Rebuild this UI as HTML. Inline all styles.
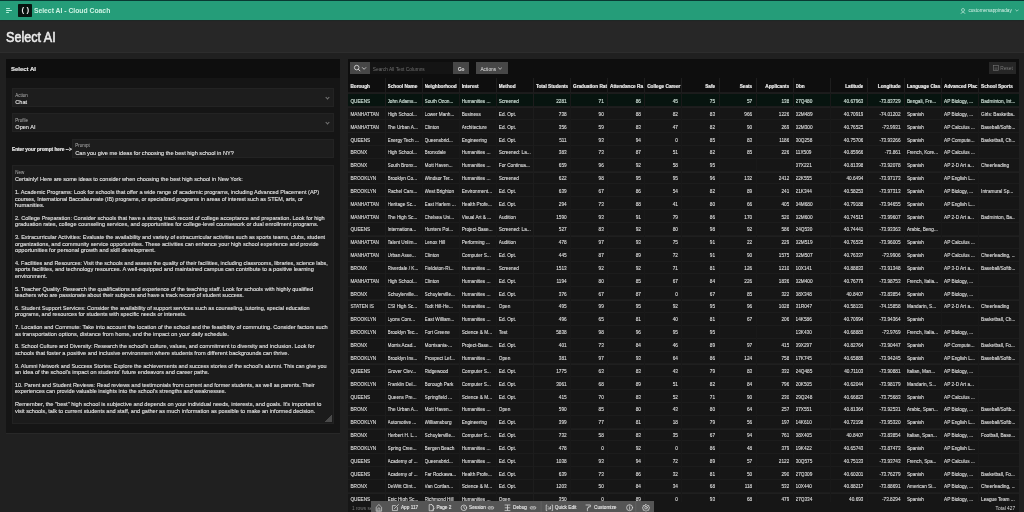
<!DOCTYPE html>
<html><head><meta charset="utf-8"><title>Select AI - Cloud Coach</title>
<style>
*{box-sizing:border-box}
html,body{margin:0;padding:0}
body{width:1024px;height:512px;overflow:hidden;position:relative;background:#1e1e1e;font-family:"Liberation Sans",sans-serif;color:#e6e6e6}
.a{position:absolute}
.topline{position:absolute;left:0;top:0;width:1024px;height:1.2px;background:#0a3a33}
.hdr{position:absolute;left:0;top:1.2px;width:1024px;height:18.4px;background:#259d79;box-shadow:0 0.8px 1.4px rgba(8,42,34,0.9)}
.ham{position:absolute;left:5.7px;height:0.9px;background:#b8f2dd;border-radius:1px}
.logo{position:absolute;left:18.3px;top:4px;width:13.7px;height:12.7px;background:#08140f;border-radius:0.8px}
.apptitle{position:absolute;left:33.9px;top:5.9px;font-size:6.8px;line-height:10px;font-weight:bold;color:#cdf3e4;white-space:nowrap}
.user{position:absolute;left:968.4px;top:7.2px;font-size:4.71px;line-height:8px;color:#d6f1e8;white-space:nowrap}
.band{position:absolute;left:0;top:19.6px;width:1024px;height:32px;background:#272727}
.bandline{position:absolute;left:0;top:51.6px;width:1024px;height:1.2px;background:#2d2d2d}
.ptitle{position:absolute;left:6.1px;top:29px;font-size:14px;line-height:16px;font-weight:normal;color:#ececec;white-space:nowrap;transform:scaleX(0.9);transform-origin:0 0;-webkit-text-stroke:0.55px #ececec}
.regL{position:absolute;left:6.2px;top:58.5px;width:333.6px;height:374.2px;background:#151515;box-shadow:0 1px 0 #282828}
.regLh{position:absolute;left:6.2px;top:58.5px;width:333.6px;height:19.1px;background:#0e0e0e}
.rtitle{position:absolute;left:10.9px;top:64.6px;font-size:6px;line-height:9px;font-weight:bold;color:#e8e8e8;white-space:nowrap}
.fld{position:absolute;background:#1d1d1d;border:0.6px solid #232323}
.lbl{position:absolute;font-size:4.5px;line-height:6px;color:#b4b4b4;white-space:nowrap}
.val{position:absolute;font-size:5.6px;line-height:8px;color:#e4e4e4;white-space:nowrap}
.chev{position:absolute;width:3px;height:3px;border-right:0.7px solid #777;border-bottom:0.7px solid #777;transform:rotate(45deg)}
.plabel{position:absolute;left:12px;top:147.4px;font-size:4.73px;line-height:6.5px;font-weight:bold;color:#e8e8e8;white-space:nowrap}
.ta{position:absolute;left:11.8px;top:164.8px;width:322.2px;height:259px;background:#1b1b1b;border:0.6px solid #222}
.tatext{position:absolute;left:2.45px;top:10.7px;font-size:6px;line-height:6.43px;color:#e2e2e2;white-space:nowrap;transform:scaleX(0.925);transform-origin:0 0}
.ln{height:6.43px}
.grip{position:absolute;right:0.8px;bottom:0.8px;width:7px;height:7px;background:linear-gradient(135deg,transparent 50%,#4a4a4a 50%)}
.regR{position:absolute;left:347.9px;top:59.2px;width:671.1px;height:460px;background:#161616}
.regRt{position:absolute;left:347.9px;top:59.2px;width:671.1px;height:18.6px;background:#0e0e0e}
.btn{position:absolute;background:#474747;color:#e0e0e0;font-size:4.8px;line-height:12.7px;text-align:center;white-space:nowrap;padding-top:1.7px}
.srch{position:absolute;left:370.2px;top:61.8px;width:83.2px;height:12.7px;background:#141414}
.thead{position:absolute;left:348px;top:77.8px;width:671px;height:15.6px;background:#0e0e0e;border-bottom:1px solid #1b1b1b}
.th{position:absolute;top:1.4px;height:15.6px;line-height:15.6px;font-size:4.72px;font-weight:bold;color:#ececec;white-space:nowrap;overflow:hidden}
.r{text-align:right}
.vl{position:absolute;top:0;width:0.6px;height:15.6px;background:#1e1e1e}
.tbody{position:absolute;left:348px;top:93.4px;width:671px;height:420px}
.vlb{position:absolute;top:0;width:0.6px;height:420px;background:#181818}
.tr{position:absolute;left:0;width:671px;border-bottom:0.8px solid #1c1c1c}
.tr.b5{border-top:1.2px solid #1f1f1f}
.b5 .td{top:0.25px}
.tr.hl{background:#07140f;border-bottom:1px solid #1c1c1c;border-top:1px solid #1c1c1c}
.hl .td{top:0.95px;height:14px;line-height:14px;color:#cfe0d8}
.td{position:absolute;top:1.45px;height:12.85px;line-height:12.85px;font-size:4.72px;color:#dcdcdc;white-space:nowrap;overflow:hidden}
.dev{position:absolute;left:371.2px;top:501px;width:283px;height:11px;background:#555}
.dt{position:absolute;top:503.4px;font-size:4.75px;line-height:10px;color:#e6e6e6;white-space:nowrap}
.tatext,.val,.td,.dt{-webkit-text-stroke:0.12px currentColor}
.th,.plabel,.rtitle{-webkit-text-stroke:0.18px currentColor}
</style></head><body><div id="root" style="position:absolute;left:0;top:0;width:1024px;height:512px;will-change:transform;background:#202020">
<div class="band"></div>
<div class="bandline"></div>
<div class="topline"></div>
<div class="hdr"></div>
<div class="ham" style="top:7.7px;width:4.8px"></div>
<div class="ham" style="top:9.8px;width:6.3px"></div>
<div class="ham" style="top:11.9px;width:3.6px"></div>
<div class="logo"></div>
<div class="a" style="left:21.6px;top:5.2px;font-size:8px;line-height:10px;color:#e8e8e8;font-weight:bold;white-space:nowrap">( )</div>
<div class="apptitle">Select AI - Cloud Coach</div>
<svg class="a" style="left:960px;top:8px" width="6" height="6" viewBox="0 0 6 6"><circle cx="3" cy="2" r="1.5" fill="none" stroke="#d6f1e8" stroke-width="0.6"/><path d="M0.6 5.6 Q3 2.6 5.4 5.6" fill="none" stroke="#d6f1e8" stroke-width="0.6"/></svg>
<div class="user">customersappinaday</div>
<svg class="a" style="left:1015px;top:8.8px" width="4" height="3" viewBox="0 0 4 3"><path d="M0.4 0.6 L2 2.2 L3.6 0.6" fill="none" stroke="#d6f1e8" stroke-width="0.6"/></svg>
<div class="ptitle">Select AI</div>

<div class="regL"></div>
<div class="regLh"></div>
<div class="rtitle">Select AI</div>
<div class="fld" style="left:12px;top:88.3px;width:322px;height:18.3px"></div>
<div class="lbl" style="left:15.3px;top:92.9px">Action</div>
<div class="val" style="left:15.3px;top:98.2px">Chat</div>
<div class="chev" style="left:325.6px;top:96.4px"></div>
<div class="fld" style="left:12px;top:113px;width:322px;height:18.8px"></div>
<div class="lbl" style="left:15.3px;top:117.6px">Profile</div>
<div class="val" style="left:15.3px;top:123.4px">Open AI</div>
<div class="chev" style="left:325.6px;top:121.4px"></div>
<div class="plabel">Enter your prompt here --&gt;</div>
<div class="fld" style="left:72.3px;top:138.9px;width:261.7px;height:19.3px"></div>
<div class="lbl" style="left:75.3px;top:142.5px">Prompt</div>
<div class="val" style="left:75.3px;top:149.3px">Can you give me ideas for choosing the best high school in NY?</div>

<div class="regR"></div>
<div class="regRt"></div>
<div class="btn" style="left:350.3px;top:61.8px;width:19.9px;height:12.7px"></div>
<svg class="a" style="left:352.5px;top:63.8px" width="14" height="9" viewBox="0 0 14 9"><circle cx="3.7" cy="3.6" r="2.3" fill="none" stroke="#d2d2d2" stroke-width="0.9"/><path d="M5.4 5.3 L7 6.9" stroke="#d2d2d2" stroke-width="1" stroke-linecap="round"/><path d="M9.1 3.3 L11.1 5.3 L13.1 3.3" fill="none" stroke="#d2d2d2" stroke-width="0.85"/></svg>
<div class="srch"></div>
<div class="a" style="left:372.8px;top:65.6px;font-size:4.8px;line-height:8px;color:#6f6f6f;white-space:nowrap">Search All Text Columns</div>
<div class="btn" style="left:453.2px;top:62.1px;width:16.1px;height:12.3px;font-weight:bold">Go</div>
<div class="btn" style="left:476.1px;top:62.1px;width:31.6px;height:12.3px;text-align:left;padding-left:4.3px">Actions</div>
<svg class="a" style="left:497.6px;top:66.8px" width="4.2" height="3" viewBox="0 0 4.2 3"><path d="M0.3 0.4 L2.1 2.4 L3.9 0.4" fill="none" stroke="#ddd" stroke-width="0.7"/></svg>
<div class="btn" style="left:989px;top:61.7px;width:27px;height:12.3px;background:#262626;color:#777;padding-left:8px">Reset</div>
<svg class="a" style="left:992.5px;top:64.8px" width="6" height="6" viewBox="0 0 6 6"><rect x="0.5" y="0.5" width="5" height="5" fill="none" stroke="#777" stroke-width="0.6"/><path d="M1.5 3 H4.5 M1.5 4.2 H4.5" stroke="#777" stroke-width="0.5"/></svg>

<div class="ta"><div class="lbl" style="left:2.5px;top:4px">New</div><div class="tatext">
<div class="ln"><span style="display:inline-block;transform:scaleX(1.0031);transform-origin:0 0">Certainly! Here are some ideas to consider when choosing the best high school in New York:</span></div>
<div class="ln">&nbsp;</div>
<div class="ln"><span style="display:inline-block;transform:scaleX(1.0013);transform-origin:0 0">1. Academic Programs: Look for schools that offer a wide range of academic programs, including Advanced Placement (AP)</span></div>
<div class="ln"><span style="display:inline-block;transform:scaleX(0.9829);transform-origin:0 0">courses, International Baccalaureate (IB) programs, or specialized programs in areas of interest such as STEM, arts, or</span></div>
<div class="ln"><span style="display:inline-block;transform:scaleX(1.0357);transform-origin:0 0">humanities.</span></div>
<div class="ln">&nbsp;</div>
<div class="ln"><span style="display:inline-block;transform:scaleX(1.0039);transform-origin:0 0">2. College Preparation: Consider schools that have a strong track record of college acceptance and preparation. Look for high</span></div>
<div class="ln"><span style="display:inline-block;transform:scaleX(1.0140);transform-origin:0 0">graduation rates, college counseling services, and opportunities for college-level coursework or dual enrollment programs.</span></div>
<div class="ln">&nbsp;</div>
<div class="ln"><span style="display:inline-block;transform:scaleX(0.9942);transform-origin:0 0">3. Extracurricular Activities: Evaluate the availability and variety of extracurricular activities such as sports teams, clubs, student</span></div>
<div class="ln"><span style="display:inline-block;transform:scaleX(1.0056);transform-origin:0 0">organizations, and community service opportunities. These activities can enhance your high school experience and provide</span></div>
<div class="ln"><span style="display:inline-block;transform:scaleX(1.0234);transform-origin:0 0">opportunities for personal growth and skill development.</span></div>
<div class="ln">&nbsp;</div>
<div class="ln"><span style="display:inline-block;transform:scaleX(0.9830);transform-origin:0 0">4. Facilities and Resources: Visit the schools and assess the quality of their facilities, including classrooms, libraries, science labs,</span></div>
<div class="ln"><span style="display:inline-block;transform:scaleX(1.0153);transform-origin:0 0">sports facilities, and technology resources. A well-equipped and maintained campus can contribute to a positive learning</span></div>
<div class="ln"><span style="display:inline-block;transform:scaleX(1.0000);transform-origin:0 0">environment.</span></div>
<div class="ln">&nbsp;</div>
<div class="ln"><span style="display:inline-block;transform:scaleX(1.0037);transform-origin:0 0">5. Teacher Quality: Research the qualifications and experience of the teaching staff. Look for schools with highly qualified</span></div>
<div class="ln"><span style="display:inline-block;transform:scaleX(0.9969);transform-origin:0 0">teachers who are passionate about their subjects and have a track record of student success.</span></div>
<div class="ln">&nbsp;</div>
<div class="ln"><span style="display:inline-block;transform:scaleX(0.9980);transform-origin:0 0">6. Student Support Services: Consider the availability of support services such as counseling, tutoring, special education</span></div>
<div class="ln"><span style="display:inline-block;transform:scaleX(1.0035);transform-origin:0 0">programs, and resources for students with specific needs or interests.</span></div>
<div class="ln">&nbsp;</div>
<div class="ln"><span style="display:inline-block;transform:scaleX(1.0126);transform-origin:0 0">7. Location and Commute: Take into account the location of the school and the feasibility of commuting. Consider factors such</span></div>
<div class="ln"><span style="display:inline-block;transform:scaleX(1.0157);transform-origin:0 0">as transportation options, distance from home, and the impact on your daily schedule.</span></div>
<div class="ln">&nbsp;</div>
<div class="ln"><span style="display:inline-block;transform:scaleX(0.9973);transform-origin:0 0">8. School Culture and Diversity: Research the school's culture, values, and commitment to diversity and inclusion. Look for</span></div>
<div class="ln"><span style="display:inline-block;transform:scaleX(1.0164);transform-origin:0 0">schools that foster a positive and inclusive environment where students from different backgrounds can thrive.</span></div>
<div class="ln">&nbsp;</div>
<div class="ln"><span style="display:inline-block;transform:scaleX(0.9892);transform-origin:0 0">9. Alumni Network and Success Stories: Explore the achievements and success stories of the school's alumni. This can give you</span></div>
<div class="ln"><span style="display:inline-block;transform:scaleX(1.0104);transform-origin:0 0">an idea of the school's impact on students' future endeavors and career paths.</span></div>
<div class="ln">&nbsp;</div>
<div class="ln"><span style="display:inline-block;transform:scaleX(0.9875);transform-origin:0 0">10. Parent and Student Reviews: Read reviews and testimonials from current and former students, as well as parents. Their</span></div>
<div class="ln"><span style="display:inline-block;transform:scaleX(0.9925);transform-origin:0 0">experiences can provide valuable insights into the school's strengths and weaknesses.</span></div>
<div class="ln">&nbsp;</div>
<div class="ln"><span style="display:inline-block;transform:scaleX(1.0132);transform-origin:0 0">Remember, the "best" high school is subjective and depends on your individual needs, interests, and goals. It's important to</span></div>
<div class="ln"><span style="display:inline-block;transform:scaleX(1.0074);transform-origin:0 0">visit schools, talk to current students and staff, and gather as much information as possible to make an informed decision.</span></div>
</div><div class="grip"></div></div>
<div class="thead">
<div class="th" style="left:2.40px;width:34.10px">Borough</div>
<div class="th" style="left:39.50px;width:34.10px">School Name</div>
<div class="th" style="left:76.60px;width:34.10px">Neighborhood</div>
<div class="th" style="left:113.70px;width:34.10px">Interest</div>
<div class="th" style="left:150.80px;width:34.10px">Method</div>
<div class="th" style="left:187.90px;width:34.10px">Total Students</div>
<div class="th" style="left:225.00px;width:34.10px">Graduation Rat</div>
<div class="th" style="left:262.10px;width:34.10px">Attendance Ra</div>
<div class="th" style="left:299.20px;width:34.10px">College Career</div>
<div class="th r" style="left:333.90px;width:33.20px">Safe</div>
<div class="th r" style="left:371.00px;width:33.20px">Seats</div>
<div class="th r" style="left:408.10px;width:33.20px">Applicants</div>
<div class="th" style="left:447.60px;width:34.10px">Dbn</div>
<div class="th r" style="left:482.30px;width:33.20px">Latitude</div>
<div class="th r" style="left:519.40px;width:33.20px">Longitude</div>
<div class="th" style="left:558.90px;width:34.10px">Language Clas</div>
<div class="th" style="left:596.00px;width:34.10px">Advanced Plac</div>
<div class="th" style="left:633.10px;width:34.10px">School Sports</div>
<div class="vl" style="left:36.60px"></div>
<div class="vl" style="left:73.70px"></div>
<div class="vl" style="left:110.80px"></div>
<div class="vl" style="left:147.90px"></div>
<div class="vl" style="left:185.00px"></div>
<div class="vl" style="left:222.10px"></div>
<div class="vl" style="left:259.20px"></div>
<div class="vl" style="left:296.30px"></div>
<div class="vl" style="left:333.40px"></div>
<div class="vl" style="left:370.50px"></div>
<div class="vl" style="left:407.60px"></div>
<div class="vl" style="left:444.70px"></div>
<div class="vl" style="left:481.80px"></div>
<div class="vl" style="left:518.90px"></div>
<div class="vl" style="left:556.00px"></div>
<div class="vl" style="left:593.10px"></div>
<div class="vl" style="left:630.20px"></div>
</div>
<div class="tbody">
<div class="tr hl" style="top:0.00px;height:14.00px">
<span class="td" style="left:2.40px;width:33.90px">QUEENS</span>
<span class="td" style="left:39.50px;width:33.90px">John Adams...</span>
<span class="td" style="left:76.60px;width:33.90px">South Ozon...</span>
<span class="td" style="left:113.70px;width:33.90px">Humanities ...</span>
<span class="td" style="left:150.80px;width:33.90px">Screened</span>
<span class="td r" style="left:185.50px;width:33.20px">2281</span>
<span class="td r" style="left:222.60px;width:33.20px">71</span>
<span class="td r" style="left:259.70px;width:33.20px">86</span>
<span class="td r" style="left:296.80px;width:33.20px">45</span>
<span class="td r" style="left:333.90px;width:33.20px">75</span>
<span class="td r" style="left:371.00px;width:33.20px">57</span>
<span class="td r" style="left:408.10px;width:33.20px">138</span>
<span class="td" style="left:447.60px;width:33.90px">27Q480</span>
<span class="td r" style="left:482.30px;width:33.20px">40.67963</span>
<span class="td r" style="left:519.40px;width:33.20px">-73.83729</span>
<span class="td" style="left:558.90px;width:33.90px">Bengali, Fre...</span>
<span class="td" style="left:596.00px;width:33.90px">AP Biology, ...</span>
<span class="td" style="left:633.10px;width:33.90px">Badminton, Int...</span>
</div>
<div class="tr b5" style="top:14.00px;height:12.85px">
<span class="td" style="left:2.40px;width:33.90px">MANHATTAN</span>
<span class="td" style="left:39.50px;width:33.90px">High School...</span>
<span class="td" style="left:76.60px;width:33.90px">Lower Manh...</span>
<span class="td" style="left:113.70px;width:33.90px">Business</span>
<span class="td" style="left:150.80px;width:33.90px">Ed. Opt.</span>
<span class="td r" style="left:185.50px;width:33.20px">738</span>
<span class="td r" style="left:222.60px;width:33.20px">90</span>
<span class="td r" style="left:259.70px;width:33.20px">88</span>
<span class="td r" style="left:296.80px;width:33.20px">82</span>
<span class="td r" style="left:333.90px;width:33.20px">83</span>
<span class="td r" style="left:371.00px;width:33.20px">966</span>
<span class="td r" style="left:408.10px;width:33.20px">1226</span>
<span class="td" style="left:447.60px;width:33.90px">02M489</span>
<span class="td r" style="left:482.30px;width:33.20px">40.70919</span>
<span class="td r" style="left:519.40px;width:33.20px">-74.01202</span>
<span class="td" style="left:558.90px;width:33.90px">Spanish</span>
<span class="td" style="left:596.00px;width:33.90px">AP Biology, ...</span>
<span class="td" style="left:633.10px;width:33.90px">Girls: Basketba...</span>
</div>
<div class="tr" style="top:26.85px;height:12.85px">
<span class="td" style="left:2.40px;width:33.90px">MANHATTAN</span>
<span class="td" style="left:39.50px;width:33.90px">The Urban A...</span>
<span class="td" style="left:76.60px;width:33.90px">Clinton</span>
<span class="td" style="left:113.70px;width:33.90px">Architecture</span>
<span class="td" style="left:150.80px;width:33.90px">Ed. Opt.</span>
<span class="td r" style="left:185.50px;width:33.20px">356</span>
<span class="td r" style="left:222.60px;width:33.20px">59</span>
<span class="td r" style="left:259.70px;width:33.20px">83</span>
<span class="td r" style="left:296.80px;width:33.20px">47</span>
<span class="td r" style="left:333.90px;width:33.20px">82</span>
<span class="td r" style="left:371.00px;width:33.20px">90</span>
<span class="td r" style="left:408.10px;width:33.20px">269</span>
<span class="td" style="left:447.60px;width:33.90px">02M300</span>
<span class="td r" style="left:482.30px;width:33.20px">40.76525</span>
<span class="td r" style="left:519.40px;width:33.20px">-73.9931</span>
<span class="td" style="left:558.90px;width:33.90px">Spanish</span>
<span class="td" style="left:596.00px;width:33.90px">AP Calculus ...</span>
<span class="td" style="left:633.10px;width:33.90px">Baseball/Softb...</span>
</div>
<div class="tr" style="top:39.70px;height:12.85px">
<span class="td" style="left:2.40px;width:33.90px">QUEENS</span>
<span class="td" style="left:39.50px;width:33.90px">Energy Tech ...</span>
<span class="td" style="left:76.60px;width:33.90px">Queensbrid...</span>
<span class="td" style="left:113.70px;width:33.90px">Engineering</span>
<span class="td" style="left:150.80px;width:33.90px">Ed. Opt.</span>
<span class="td r" style="left:185.50px;width:33.20px">511</span>
<span class="td r" style="left:222.60px;width:33.20px">93</span>
<span class="td r" style="left:259.70px;width:33.20px">94</span>
<span class="td r" style="left:296.80px;width:33.20px">0</span>
<span class="td r" style="left:333.90px;width:33.20px">85</span>
<span class="td r" style="left:371.00px;width:33.20px">83</span>
<span class="td r" style="left:408.10px;width:33.20px">1186</span>
<span class="td" style="left:447.60px;width:33.90px">30Q258</span>
<span class="td r" style="left:482.30px;width:33.20px">40.75706</span>
<span class="td r" style="left:519.40px;width:33.20px">-73.93266</span>
<span class="td" style="left:558.90px;width:33.90px">Spanish</span>
<span class="td" style="left:596.00px;width:33.90px">AP Compute...</span>
<span class="td" style="left:633.10px;width:33.90px">Basketball, Ch...</span>
</div>
<div class="tr" style="top:52.55px;height:12.85px">
<span class="td" style="left:2.40px;width:33.90px">BRONX</span>
<span class="td" style="left:39.50px;width:33.90px">High School...</span>
<span class="td" style="left:76.60px;width:33.90px">Bronxdale</span>
<span class="td" style="left:113.70px;width:33.90px">Humanities ...</span>
<span class="td" style="left:150.80px;width:33.90px">Screened: La...</span>
<span class="td r" style="left:185.50px;width:33.20px">383</span>
<span class="td r" style="left:222.60px;width:33.20px">73</span>
<span class="td r" style="left:259.70px;width:33.20px">87</span>
<span class="td r" style="left:296.80px;width:33.20px">51</span>
<span class="td r" style="left:333.90px;width:33.20px">82</span>
<span class="td r" style="left:371.00px;width:33.20px">85</span>
<span class="td r" style="left:408.10px;width:33.20px">226</span>
<span class="td" style="left:447.60px;width:33.90px">11X509</span>
<span class="td r" style="left:482.30px;width:33.20px">40.85966</span>
<span class="td r" style="left:519.40px;width:33.20px">-73.861</span>
<span class="td" style="left:558.90px;width:33.90px">French, Kore...</span>
<span class="td" style="left:596.00px;width:33.90px">AP Calculus ...</span>
<span class="td" style="left:633.10px;width:33.90px"></span>
</div>
<div class="tr" style="top:65.40px;height:12.85px">
<span class="td" style="left:2.40px;width:33.90px">BRONX</span>
<span class="td" style="left:39.50px;width:33.90px">South Bronx...</span>
<span class="td" style="left:76.60px;width:33.90px">Mott Haven...</span>
<span class="td" style="left:113.70px;width:33.90px">Humanities ...</span>
<span class="td" style="left:150.80px;width:33.90px">For Continua...</span>
<span class="td r" style="left:185.50px;width:33.20px">659</span>
<span class="td r" style="left:222.60px;width:33.20px">96</span>
<span class="td r" style="left:259.70px;width:33.20px">92</span>
<span class="td r" style="left:296.80px;width:33.20px">58</span>
<span class="td r" style="left:333.90px;width:33.20px">95</span>
<span class="td r" style="left:371.00px;width:33.20px"></span>
<span class="td r" style="left:408.10px;width:33.20px"></span>
<span class="td" style="left:447.60px;width:33.90px">07X221</span>
<span class="td r" style="left:482.30px;width:33.20px">40.81398</span>
<span class="td r" style="left:519.40px;width:33.20px">-73.92078</span>
<span class="td" style="left:558.90px;width:33.90px">Spanish</span>
<span class="td" style="left:596.00px;width:33.90px">AP 2-D Art a...</span>
<span class="td" style="left:633.10px;width:33.90px">Cheerleading</span>
</div>
<div class="tr b5" style="top:78.25px;height:12.85px">
<span class="td" style="left:2.40px;width:33.90px">BROOKLYN</span>
<span class="td" style="left:39.50px;width:33.90px">Brooklyn Co...</span>
<span class="td" style="left:76.60px;width:33.90px">Windsor Ter...</span>
<span class="td" style="left:113.70px;width:33.90px">Humanities ...</span>
<span class="td" style="left:150.80px;width:33.90px">Screened</span>
<span class="td r" style="left:185.50px;width:33.20px">622</span>
<span class="td r" style="left:222.60px;width:33.20px">98</span>
<span class="td r" style="left:259.70px;width:33.20px">95</span>
<span class="td r" style="left:296.80px;width:33.20px">95</span>
<span class="td r" style="left:333.90px;width:33.20px">96</span>
<span class="td r" style="left:371.00px;width:33.20px">132</span>
<span class="td r" style="left:408.10px;width:33.20px">2412</span>
<span class="td" style="left:447.60px;width:33.90px">22K555</span>
<span class="td r" style="left:482.30px;width:33.20px">40.6494</span>
<span class="td r" style="left:519.40px;width:33.20px">-73.97173</span>
<span class="td" style="left:558.90px;width:33.90px">Spanish</span>
<span class="td" style="left:596.00px;width:33.90px">AP English L...</span>
<span class="td" style="left:633.10px;width:33.90px"></span>
</div>
<div class="tr" style="top:91.10px;height:12.85px">
<span class="td" style="left:2.40px;width:33.90px">BROOKLYN</span>
<span class="td" style="left:39.50px;width:33.90px">Rachel Cars...</span>
<span class="td" style="left:76.60px;width:33.90px">West Brighton</span>
<span class="td" style="left:113.70px;width:33.90px">Environment...</span>
<span class="td" style="left:150.80px;width:33.90px">Ed. Opt.</span>
<span class="td r" style="left:185.50px;width:33.20px">639</span>
<span class="td r" style="left:222.60px;width:33.20px">67</span>
<span class="td r" style="left:259.70px;width:33.20px">86</span>
<span class="td r" style="left:296.80px;width:33.20px">54</span>
<span class="td r" style="left:333.90px;width:33.20px">82</span>
<span class="td r" style="left:371.00px;width:33.20px">89</span>
<span class="td r" style="left:408.10px;width:33.20px">241</span>
<span class="td" style="left:447.60px;width:33.90px">21K344</span>
<span class="td r" style="left:482.30px;width:33.20px">40.58253</span>
<span class="td r" style="left:519.40px;width:33.20px">-73.97313</span>
<span class="td" style="left:558.90px;width:33.90px">Spanish</span>
<span class="td" style="left:596.00px;width:33.90px">AP Biology, ...</span>
<span class="td" style="left:633.10px;width:33.90px">Intramural Sp...</span>
</div>
<div class="tr" style="top:103.95px;height:12.85px">
<span class="td" style="left:2.40px;width:33.90px">MANHATTAN</span>
<span class="td" style="left:39.50px;width:33.90px">Heritage Sc...</span>
<span class="td" style="left:76.60px;width:33.90px">East Harlem ...</span>
<span class="td" style="left:113.70px;width:33.90px">Health Profe...</span>
<span class="td" style="left:150.80px;width:33.90px">Ed. Opt.</span>
<span class="td r" style="left:185.50px;width:33.20px">294</span>
<span class="td r" style="left:222.60px;width:33.20px">73</span>
<span class="td r" style="left:259.70px;width:33.20px">88</span>
<span class="td r" style="left:296.80px;width:33.20px">41</span>
<span class="td r" style="left:333.90px;width:33.20px">80</span>
<span class="td r" style="left:371.00px;width:33.20px">66</span>
<span class="td r" style="left:408.10px;width:33.20px">405</span>
<span class="td" style="left:447.60px;width:33.90px">04M680</span>
<span class="td r" style="left:482.30px;width:33.20px">40.79188</span>
<span class="td r" style="left:519.40px;width:33.20px">-73.94655</span>
<span class="td" style="left:558.90px;width:33.90px">Spanish</span>
<span class="td" style="left:596.00px;width:33.90px">AP English L...</span>
<span class="td" style="left:633.10px;width:33.90px"></span>
</div>
<div class="tr" style="top:116.80px;height:12.85px">
<span class="td" style="left:2.40px;width:33.90px">MANHATTAN</span>
<span class="td" style="left:39.50px;width:33.90px">The High Sc...</span>
<span class="td" style="left:76.60px;width:33.90px">Chelsea Uni...</span>
<span class="td" style="left:113.70px;width:33.90px">Visual Art &amp; ...</span>
<span class="td" style="left:150.80px;width:33.90px">Audition</span>
<span class="td r" style="left:185.50px;width:33.20px">1590</span>
<span class="td r" style="left:222.60px;width:33.20px">93</span>
<span class="td r" style="left:259.70px;width:33.20px">91</span>
<span class="td r" style="left:296.80px;width:33.20px">79</span>
<span class="td r" style="left:333.90px;width:33.20px">86</span>
<span class="td r" style="left:371.00px;width:33.20px">170</span>
<span class="td r" style="left:408.10px;width:33.20px">520</span>
<span class="td" style="left:447.60px;width:33.90px">02M600</span>
<span class="td r" style="left:482.30px;width:33.20px">40.74515</span>
<span class="td r" style="left:519.40px;width:33.20px">-73.99607</span>
<span class="td" style="left:558.90px;width:33.90px">Spanish</span>
<span class="td" style="left:596.00px;width:33.90px">AP 2-D Art a...</span>
<span class="td" style="left:633.10px;width:33.90px">Badminton, Ba...</span>
</div>
<div class="tr" style="top:129.65px;height:12.85px">
<span class="td" style="left:2.40px;width:33.90px">QUEENS</span>
<span class="td" style="left:39.50px;width:33.90px">Internationa...</span>
<span class="td" style="left:76.60px;width:33.90px">Hunters Poi...</span>
<span class="td" style="left:113.70px;width:33.90px">Project-Base...</span>
<span class="td" style="left:150.80px;width:33.90px">Screened: La...</span>
<span class="td r" style="left:185.50px;width:33.20px">527</span>
<span class="td r" style="left:222.60px;width:33.20px">83</span>
<span class="td r" style="left:259.70px;width:33.20px">92</span>
<span class="td r" style="left:296.80px;width:33.20px">80</span>
<span class="td r" style="left:333.90px;width:33.20px">98</span>
<span class="td r" style="left:371.00px;width:33.20px">92</span>
<span class="td r" style="left:408.10px;width:33.20px">586</span>
<span class="td" style="left:447.60px;width:33.90px">24Q530</span>
<span class="td r" style="left:482.30px;width:33.20px">40.74441</span>
<span class="td r" style="left:519.40px;width:33.20px">-73.93363</span>
<span class="td" style="left:558.90px;width:33.90px">Arabic, Beng...</span>
<span class="td" style="left:596.00px;width:33.90px"></span>
<span class="td" style="left:633.10px;width:33.90px"></span>
</div>
<div class="tr b5" style="top:142.50px;height:12.85px">
<span class="td" style="left:2.40px;width:33.90px">MANHATTAN</span>
<span class="td" style="left:39.50px;width:33.90px">Talent Unlim...</span>
<span class="td" style="left:76.60px;width:33.90px">Lenox Hill</span>
<span class="td" style="left:113.70px;width:33.90px">Performing ...</span>
<span class="td" style="left:150.80px;width:33.90px">Audition</span>
<span class="td r" style="left:185.50px;width:33.20px">478</span>
<span class="td r" style="left:222.60px;width:33.20px">97</span>
<span class="td r" style="left:259.70px;width:33.20px">93</span>
<span class="td r" style="left:296.80px;width:33.20px">75</span>
<span class="td r" style="left:333.90px;width:33.20px">91</span>
<span class="td r" style="left:371.00px;width:33.20px">22</span>
<span class="td r" style="left:408.10px;width:33.20px">229</span>
<span class="td" style="left:447.60px;width:33.90px">02M519</span>
<span class="td r" style="left:482.30px;width:33.20px">40.76535</span>
<span class="td r" style="left:519.40px;width:33.20px">-73.96005</span>
<span class="td" style="left:558.90px;width:33.90px">Spanish</span>
<span class="td" style="left:596.00px;width:33.90px">AP Calculus ...</span>
<span class="td" style="left:633.10px;width:33.90px"></span>
</div>
<div class="tr" style="top:155.35px;height:12.85px">
<span class="td" style="left:2.40px;width:33.90px">MANHATTAN</span>
<span class="td" style="left:39.50px;width:33.90px">Urban Asse...</span>
<span class="td" style="left:76.60px;width:33.90px">Clinton</span>
<span class="td" style="left:113.70px;width:33.90px">Computer S...</span>
<span class="td" style="left:150.80px;width:33.90px">Ed. Opt.</span>
<span class="td r" style="left:185.50px;width:33.20px">445</span>
<span class="td r" style="left:222.60px;width:33.20px">87</span>
<span class="td r" style="left:259.70px;width:33.20px">89</span>
<span class="td r" style="left:296.80px;width:33.20px">72</span>
<span class="td r" style="left:333.90px;width:33.20px">91</span>
<span class="td r" style="left:371.00px;width:33.20px">90</span>
<span class="td r" style="left:408.10px;width:33.20px">1575</span>
<span class="td" style="left:447.60px;width:33.90px">02M507</span>
<span class="td r" style="left:482.30px;width:33.20px">40.76337</span>
<span class="td r" style="left:519.40px;width:33.20px">-73.9906</span>
<span class="td" style="left:558.90px;width:33.90px">Spanish</span>
<span class="td" style="left:596.00px;width:33.90px">AP Calculus ...</span>
<span class="td" style="left:633.10px;width:33.90px">Cheerleading, ...</span>
</div>
<div class="tr" style="top:168.20px;height:12.85px">
<span class="td" style="left:2.40px;width:33.90px">BRONX</span>
<span class="td" style="left:39.50px;width:33.90px">Riverdale / K...</span>
<span class="td" style="left:76.60px;width:33.90px">Fieldston-Ri...</span>
<span class="td" style="left:113.70px;width:33.90px">Humanities ...</span>
<span class="td" style="left:150.80px;width:33.90px">Screened</span>
<span class="td r" style="left:185.50px;width:33.20px">1513</span>
<span class="td r" style="left:222.60px;width:33.20px">92</span>
<span class="td r" style="left:259.70px;width:33.20px">92</span>
<span class="td r" style="left:296.80px;width:33.20px">71</span>
<span class="td r" style="left:333.90px;width:33.20px">81</span>
<span class="td r" style="left:371.00px;width:33.20px">126</span>
<span class="td r" style="left:408.10px;width:33.20px">1210</span>
<span class="td" style="left:447.60px;width:33.90px">10X141</span>
<span class="td r" style="left:482.30px;width:33.20px">40.88833</span>
<span class="td r" style="left:519.40px;width:33.20px">-73.91348</span>
<span class="td" style="left:558.90px;width:33.90px">Spanish</span>
<span class="td" style="left:596.00px;width:33.90px">AP 3-D Art a...</span>
<span class="td" style="left:633.10px;width:33.90px">Baseball/Softb...</span>
</div>
<div class="tr" style="top:181.05px;height:12.85px">
<span class="td" style="left:2.40px;width:33.90px">MANHATTAN</span>
<span class="td" style="left:39.50px;width:33.90px">High School...</span>
<span class="td" style="left:76.60px;width:33.90px">Clinton</span>
<span class="td" style="left:113.70px;width:33.90px">Humanities ...</span>
<span class="td" style="left:150.80px;width:33.90px">Ed. Opt.</span>
<span class="td r" style="left:185.50px;width:33.20px">1194</span>
<span class="td r" style="left:222.60px;width:33.20px">80</span>
<span class="td r" style="left:259.70px;width:33.20px">85</span>
<span class="td r" style="left:296.80px;width:33.20px">67</span>
<span class="td r" style="left:333.90px;width:33.20px">84</span>
<span class="td r" style="left:371.00px;width:33.20px">226</span>
<span class="td r" style="left:408.10px;width:33.20px">1836</span>
<span class="td" style="left:447.60px;width:33.90px">02M400</span>
<span class="td r" style="left:482.30px;width:33.20px">40.76779</span>
<span class="td r" style="left:519.40px;width:33.20px">-73.98753</span>
<span class="td" style="left:558.90px;width:33.90px">French, Italia...</span>
<span class="td" style="left:596.00px;width:33.90px">AP Biology, ...</span>
<span class="td" style="left:633.10px;width:33.90px"></span>
</div>
<div class="tr" style="top:193.90px;height:12.85px">
<span class="td" style="left:2.40px;width:33.90px">BRONX</span>
<span class="td" style="left:39.50px;width:33.90px">Schuylerville...</span>
<span class="td" style="left:76.60px;width:33.90px">Schuylerville...</span>
<span class="td" style="left:113.70px;width:33.90px">Humanities ...</span>
<span class="td" style="left:150.80px;width:33.90px">Ed. Opt.</span>
<span class="td r" style="left:185.50px;width:33.20px">376</span>
<span class="td r" style="left:222.60px;width:33.20px">67</span>
<span class="td r" style="left:259.70px;width:33.20px">87</span>
<span class="td r" style="left:296.80px;width:33.20px">0</span>
<span class="td r" style="left:333.90px;width:33.20px">67</span>
<span class="td r" style="left:371.00px;width:33.20px">85</span>
<span class="td r" style="left:408.10px;width:33.20px">322</span>
<span class="td" style="left:447.60px;width:33.90px">08X348</span>
<span class="td r" style="left:482.30px;width:33.20px">40.8407</span>
<span class="td r" style="left:519.40px;width:33.20px">-73.83854</span>
<span class="td" style="left:558.90px;width:33.90px">Spanish</span>
<span class="td" style="left:596.00px;width:33.90px">AP Biology, ...</span>
<span class="td" style="left:633.10px;width:33.90px"></span>
</div>
<div class="tr b5" style="top:206.75px;height:12.85px">
<span class="td" style="left:2.40px;width:33.90px">STATEN IS</span>
<span class="td" style="left:39.50px;width:33.90px">CSI High Sc...</span>
<span class="td" style="left:76.60px;width:33.90px">Todt Hill-He...</span>
<span class="td" style="left:113.70px;width:33.90px">Humanities ...</span>
<span class="td" style="left:150.80px;width:33.90px">Open</span>
<span class="td r" style="left:185.50px;width:33.20px">495</span>
<span class="td r" style="left:222.60px;width:33.20px">99</span>
<span class="td r" style="left:259.70px;width:33.20px">95</span>
<span class="td r" style="left:296.80px;width:33.20px">92</span>
<span class="td r" style="left:333.90px;width:33.20px">95</span>
<span class="td r" style="left:371.00px;width:33.20px">96</span>
<span class="td r" style="left:408.10px;width:33.20px">1028</span>
<span class="td" style="left:447.60px;width:33.90px">31R047</span>
<span class="td r" style="left:482.30px;width:33.20px">40.58131</span>
<span class="td r" style="left:519.40px;width:33.20px">-74.15858</span>
<span class="td" style="left:558.90px;width:33.90px">Mandarin, S...</span>
<span class="td" style="left:596.00px;width:33.90px">AP 2-D Art a...</span>
<span class="td" style="left:633.10px;width:33.90px">Cheerleading</span>
</div>
<div class="tr" style="top:219.60px;height:12.85px">
<span class="td" style="left:2.40px;width:33.90px">BROOKLYN</span>
<span class="td" style="left:39.50px;width:33.90px">Lyons Com...</span>
<span class="td" style="left:76.60px;width:33.90px">East William...</span>
<span class="td" style="left:113.70px;width:33.90px">Humanities ...</span>
<span class="td" style="left:150.80px;width:33.90px">Ed. Opt.</span>
<span class="td r" style="left:185.50px;width:33.20px">496</span>
<span class="td r" style="left:222.60px;width:33.20px">65</span>
<span class="td r" style="left:259.70px;width:33.20px">81</span>
<span class="td r" style="left:296.80px;width:33.20px">40</span>
<span class="td r" style="left:333.90px;width:33.20px">81</span>
<span class="td r" style="left:371.00px;width:33.20px">67</span>
<span class="td r" style="left:408.10px;width:33.20px">206</span>
<span class="td" style="left:447.60px;width:33.90px">14K586</span>
<span class="td r" style="left:482.30px;width:33.20px">40.70994</span>
<span class="td r" style="left:519.40px;width:33.20px">-73.94364</span>
<span class="td" style="left:558.90px;width:33.90px">Spanish</span>
<span class="td" style="left:596.00px;width:33.90px"></span>
<span class="td" style="left:633.10px;width:33.90px">Basketball, Ch...</span>
</div>
<div class="tr" style="top:232.45px;height:12.85px">
<span class="td" style="left:2.40px;width:33.90px">BROOKLYN</span>
<span class="td" style="left:39.50px;width:33.90px">Brooklyn Tec...</span>
<span class="td" style="left:76.60px;width:33.90px">Fort Greene</span>
<span class="td" style="left:113.70px;width:33.90px">Science &amp; M...</span>
<span class="td" style="left:150.80px;width:33.90px">Test</span>
<span class="td r" style="left:185.50px;width:33.20px">5838</span>
<span class="td r" style="left:222.60px;width:33.20px">98</span>
<span class="td r" style="left:259.70px;width:33.20px">96</span>
<span class="td r" style="left:296.80px;width:33.20px">95</span>
<span class="td r" style="left:333.90px;width:33.20px">95</span>
<span class="td r" style="left:371.00px;width:33.20px"></span>
<span class="td r" style="left:408.10px;width:33.20px"></span>
<span class="td" style="left:447.60px;width:33.90px">13K430</span>
<span class="td r" style="left:482.30px;width:33.20px">40.68883</span>
<span class="td r" style="left:519.40px;width:33.20px">-73.9769</span>
<span class="td" style="left:558.90px;width:33.90px">French, Italia...</span>
<span class="td" style="left:596.00px;width:33.90px">AP Biology, ...</span>
<span class="td" style="left:633.10px;width:33.90px"></span>
</div>
<div class="tr" style="top:245.30px;height:12.85px">
<span class="td" style="left:2.40px;width:33.90px">BRONX</span>
<span class="td" style="left:39.50px;width:33.90px">Morris Acad...</span>
<span class="td" style="left:76.60px;width:33.90px">Morrisania-...</span>
<span class="td" style="left:113.70px;width:33.90px">Project-Base...</span>
<span class="td" style="left:150.80px;width:33.90px">Ed. Opt.</span>
<span class="td r" style="left:185.50px;width:33.20px">401</span>
<span class="td r" style="left:222.60px;width:33.20px">73</span>
<span class="td r" style="left:259.70px;width:33.20px">84</span>
<span class="td r" style="left:296.80px;width:33.20px">46</span>
<span class="td r" style="left:333.90px;width:33.20px">89</span>
<span class="td r" style="left:371.00px;width:33.20px">97</span>
<span class="td r" style="left:408.10px;width:33.20px">415</span>
<span class="td" style="left:447.60px;width:33.90px">09X297</span>
<span class="td r" style="left:482.30px;width:33.20px">40.82764</span>
<span class="td r" style="left:519.40px;width:33.20px">-73.90447</span>
<span class="td" style="left:558.90px;width:33.90px">Spanish</span>
<span class="td" style="left:596.00px;width:33.90px">AP Compute...</span>
<span class="td" style="left:633.10px;width:33.90px">Basketball, Fo...</span>
</div>
<div class="tr" style="top:258.15px;height:12.85px">
<span class="td" style="left:2.40px;width:33.90px">BROOKLYN</span>
<span class="td" style="left:39.50px;width:33.90px">Brooklyn Ins...</span>
<span class="td" style="left:76.60px;width:33.90px">Prospect Lef...</span>
<span class="td" style="left:113.70px;width:33.90px">Humanities ...</span>
<span class="td" style="left:150.80px;width:33.90px">Open</span>
<span class="td r" style="left:185.50px;width:33.20px">381</span>
<span class="td r" style="left:222.60px;width:33.20px">97</span>
<span class="td r" style="left:259.70px;width:33.20px">93</span>
<span class="td r" style="left:296.80px;width:33.20px">64</span>
<span class="td r" style="left:333.90px;width:33.20px">86</span>
<span class="td r" style="left:371.00px;width:33.20px">124</span>
<span class="td r" style="left:408.10px;width:33.20px">758</span>
<span class="td" style="left:447.60px;width:33.90px">17K745</span>
<span class="td r" style="left:482.30px;width:33.20px">40.65889</span>
<span class="td r" style="left:519.40px;width:33.20px">-73.94245</span>
<span class="td" style="left:558.90px;width:33.90px">Spanish</span>
<span class="td" style="left:596.00px;width:33.90px">AP English L...</span>
<span class="td" style="left:633.10px;width:33.90px">Baseball/Softb...</span>
</div>
<div class="tr b5" style="top:271.00px;height:12.85px">
<span class="td" style="left:2.40px;width:33.90px">QUEENS</span>
<span class="td" style="left:39.50px;width:33.90px">Grover Clev...</span>
<span class="td" style="left:76.60px;width:33.90px">Ridgewood</span>
<span class="td" style="left:113.70px;width:33.90px">Computer S...</span>
<span class="td" style="left:150.80px;width:33.90px">Ed. Opt.</span>
<span class="td r" style="left:185.50px;width:33.20px">1775</span>
<span class="td r" style="left:222.60px;width:33.20px">63</span>
<span class="td r" style="left:259.70px;width:33.20px">83</span>
<span class="td r" style="left:296.80px;width:33.20px">43</span>
<span class="td r" style="left:333.90px;width:33.20px">79</span>
<span class="td r" style="left:371.00px;width:33.20px">83</span>
<span class="td r" style="left:408.10px;width:33.20px">332</span>
<span class="td" style="left:447.60px;width:33.90px">24Q485</span>
<span class="td r" style="left:482.30px;width:33.20px">40.71103</span>
<span class="td r" style="left:519.40px;width:33.20px">-73.90881</span>
<span class="td" style="left:558.90px;width:33.90px">Italian, Man...</span>
<span class="td" style="left:596.00px;width:33.90px">AP Biology, ...</span>
<span class="td" style="left:633.10px;width:33.90px"></span>
</div>
<div class="tr" style="top:283.85px;height:12.85px">
<span class="td" style="left:2.40px;width:33.90px">BROOKLYN</span>
<span class="td" style="left:39.50px;width:33.90px">Franklin Del...</span>
<span class="td" style="left:76.60px;width:33.90px">Borough Park</span>
<span class="td" style="left:113.70px;width:33.90px">Computer S...</span>
<span class="td" style="left:150.80px;width:33.90px">Ed. Opt.</span>
<span class="td r" style="left:185.50px;width:33.20px">3061</span>
<span class="td r" style="left:222.60px;width:33.20px">68</span>
<span class="td r" style="left:259.70px;width:33.20px">89</span>
<span class="td r" style="left:296.80px;width:33.20px">51</span>
<span class="td r" style="left:333.90px;width:33.20px">82</span>
<span class="td r" style="left:371.00px;width:33.20px">84</span>
<span class="td r" style="left:408.10px;width:33.20px">796</span>
<span class="td" style="left:447.60px;width:33.90px">20K505</span>
<span class="td r" style="left:482.30px;width:33.20px">40.62044</span>
<span class="td r" style="left:519.40px;width:33.20px">-73.98179</span>
<span class="td" style="left:558.90px;width:33.90px">Mandarin, S...</span>
<span class="td" style="left:596.00px;width:33.90px">AP 2-D Art a...</span>
<span class="td" style="left:633.10px;width:33.90px"></span>
</div>
<div class="tr" style="top:296.70px;height:12.85px">
<span class="td" style="left:2.40px;width:33.90px">QUEENS</span>
<span class="td" style="left:39.50px;width:33.90px">Queens Pre...</span>
<span class="td" style="left:76.60px;width:33.90px">Springfield ...</span>
<span class="td" style="left:113.70px;width:33.90px">Science &amp; M...</span>
<span class="td" style="left:150.80px;width:33.90px">Ed. Opt.</span>
<span class="td r" style="left:185.50px;width:33.20px">415</span>
<span class="td r" style="left:222.60px;width:33.20px">70</span>
<span class="td r" style="left:259.70px;width:33.20px">83</span>
<span class="td r" style="left:296.80px;width:33.20px">52</span>
<span class="td r" style="left:333.90px;width:33.20px">71</span>
<span class="td r" style="left:371.00px;width:33.20px">90</span>
<span class="td r" style="left:408.10px;width:33.20px">230</span>
<span class="td" style="left:447.60px;width:33.90px">29Q248</span>
<span class="td r" style="left:482.30px;width:33.20px">40.66823</span>
<span class="td r" style="left:519.40px;width:33.20px">-73.75683</span>
<span class="td" style="left:558.90px;width:33.90px">Spanish</span>
<span class="td" style="left:596.00px;width:33.90px">AP Calculus ...</span>
<span class="td" style="left:633.10px;width:33.90px"></span>
</div>
<div class="tr" style="top:309.55px;height:12.85px">
<span class="td" style="left:2.40px;width:33.90px">BRONX</span>
<span class="td" style="left:39.50px;width:33.90px">The Urban A...</span>
<span class="td" style="left:76.60px;width:33.90px">Mott Haven...</span>
<span class="td" style="left:113.70px;width:33.90px">Humanities ...</span>
<span class="td" style="left:150.80px;width:33.90px">Open</span>
<span class="td r" style="left:185.50px;width:33.20px">590</span>
<span class="td r" style="left:222.60px;width:33.20px">85</span>
<span class="td r" style="left:259.70px;width:33.20px">80</span>
<span class="td r" style="left:296.80px;width:33.20px">43</span>
<span class="td r" style="left:333.90px;width:33.20px">80</span>
<span class="td r" style="left:371.00px;width:33.20px">64</span>
<span class="td r" style="left:408.10px;width:33.20px">257</span>
<span class="td" style="left:447.60px;width:33.90px">07X551</span>
<span class="td r" style="left:482.30px;width:33.20px">40.81364</span>
<span class="td r" style="left:519.40px;width:33.20px">-73.92531</span>
<span class="td" style="left:558.90px;width:33.90px">Arabic, Span...</span>
<span class="td" style="left:596.00px;width:33.90px">AP Biology, ...</span>
<span class="td" style="left:633.10px;width:33.90px">Baseball/Softb...</span>
</div>
<div class="tr" style="top:322.40px;height:12.85px">
<span class="td" style="left:2.40px;width:33.90px">BROOKLYN</span>
<span class="td" style="left:39.50px;width:33.90px">Automotive ...</span>
<span class="td" style="left:76.60px;width:33.90px">Williamsburg</span>
<span class="td" style="left:113.70px;width:33.90px">Engineering</span>
<span class="td" style="left:150.80px;width:33.90px">Ed. Opt.</span>
<span class="td r" style="left:185.50px;width:33.20px">399</span>
<span class="td r" style="left:222.60px;width:33.20px">77</span>
<span class="td r" style="left:259.70px;width:33.20px">81</span>
<span class="td r" style="left:296.80px;width:33.20px">18</span>
<span class="td r" style="left:333.90px;width:33.20px">79</span>
<span class="td r" style="left:371.00px;width:33.20px">56</span>
<span class="td r" style="left:408.10px;width:33.20px">197</span>
<span class="td" style="left:447.60px;width:33.90px">14K610</span>
<span class="td r" style="left:482.30px;width:33.20px">40.72198</span>
<span class="td r" style="left:519.40px;width:33.20px">-73.95320</span>
<span class="td" style="left:558.90px;width:33.90px">Spanish</span>
<span class="td" style="left:596.00px;width:33.90px">AP English L...</span>
<span class="td" style="left:633.10px;width:33.90px">Baseball/Softb...</span>
</div>
<div class="tr b5" style="top:335.25px;height:12.85px">
<span class="td" style="left:2.40px;width:33.90px">BRONX</span>
<span class="td" style="left:39.50px;width:33.90px">Herbert H. L...</span>
<span class="td" style="left:76.60px;width:33.90px">Schuylerville...</span>
<span class="td" style="left:113.70px;width:33.90px">Computer S...</span>
<span class="td" style="left:150.80px;width:33.90px">Ed. Opt.</span>
<span class="td r" style="left:185.50px;width:33.20px">732</span>
<span class="td r" style="left:222.60px;width:33.20px">58</span>
<span class="td r" style="left:259.70px;width:33.20px">83</span>
<span class="td r" style="left:296.80px;width:33.20px">35</span>
<span class="td r" style="left:333.90px;width:33.20px">67</span>
<span class="td r" style="left:371.00px;width:33.20px">94</span>
<span class="td r" style="left:408.10px;width:33.20px">761</span>
<span class="td" style="left:447.60px;width:33.90px">08X405</span>
<span class="td r" style="left:482.30px;width:33.20px">40.8407</span>
<span class="td r" style="left:519.40px;width:33.20px">-73.83854</span>
<span class="td" style="left:558.90px;width:33.90px">Italian, Span...</span>
<span class="td" style="left:596.00px;width:33.90px">AP Biology, ...</span>
<span class="td" style="left:633.10px;width:33.90px">Football, Base...</span>
</div>
<div class="tr" style="top:348.10px;height:12.85px">
<span class="td" style="left:2.40px;width:33.90px">BROOKLYN</span>
<span class="td" style="left:39.50px;width:33.90px">Spring Cree...</span>
<span class="td" style="left:76.60px;width:33.90px">Bergen Beach</span>
<span class="td" style="left:113.70px;width:33.90px">Humanities ...</span>
<span class="td" style="left:150.80px;width:33.90px">Ed. Opt.</span>
<span class="td r" style="left:185.50px;width:33.20px">478</span>
<span class="td r" style="left:222.60px;width:33.20px">0</span>
<span class="td r" style="left:259.70px;width:33.20px">92</span>
<span class="td r" style="left:296.80px;width:33.20px">0</span>
<span class="td r" style="left:333.90px;width:33.20px">86</span>
<span class="td r" style="left:371.00px;width:33.20px">48</span>
<span class="td r" style="left:408.10px;width:33.20px">379</span>
<span class="td" style="left:447.60px;width:33.90px">19K422</span>
<span class="td r" style="left:482.30px;width:33.20px">40.65743</span>
<span class="td r" style="left:519.40px;width:33.20px">-73.87473</span>
<span class="td" style="left:558.90px;width:33.90px">Spanish</span>
<span class="td" style="left:596.00px;width:33.90px">AP English L...</span>
<span class="td" style="left:633.10px;width:33.90px"></span>
</div>
<div class="tr" style="top:360.95px;height:12.85px">
<span class="td" style="left:2.40px;width:33.90px">QUEENS</span>
<span class="td" style="left:39.50px;width:33.90px">Academy of ...</span>
<span class="td" style="left:76.60px;width:33.90px">Queensbrid...</span>
<span class="td" style="left:113.70px;width:33.90px">Humanities ...</span>
<span class="td" style="left:150.80px;width:33.90px">Ed. Opt.</span>
<span class="td r" style="left:185.50px;width:33.20px">1038</span>
<span class="td r" style="left:222.60px;width:33.20px">93</span>
<span class="td r" style="left:259.70px;width:33.20px">94</span>
<span class="td r" style="left:296.80px;width:33.20px">72</span>
<span class="td r" style="left:333.90px;width:33.20px">89</span>
<span class="td r" style="left:371.00px;width:33.20px">57</span>
<span class="td r" style="left:408.10px;width:33.20px">2122</span>
<span class="td" style="left:447.60px;width:33.90px">30Q575</span>
<span class="td r" style="left:482.30px;width:33.20px">40.75133</span>
<span class="td r" style="left:519.40px;width:33.20px">-73.93743</span>
<span class="td" style="left:558.90px;width:33.90px">French, Spa...</span>
<span class="td" style="left:596.00px;width:33.90px">AP Calculus ...</span>
<span class="td" style="left:633.10px;width:33.90px"></span>
</div>
<div class="tr" style="top:373.80px;height:12.85px">
<span class="td" style="left:2.40px;width:33.90px">QUEENS</span>
<span class="td" style="left:39.50px;width:33.90px">Academy of ...</span>
<span class="td" style="left:76.60px;width:33.90px">Far Rockawa...</span>
<span class="td" style="left:113.70px;width:33.90px">Health Profe...</span>
<span class="td" style="left:150.80px;width:33.90px">Ed. Opt.</span>
<span class="td r" style="left:185.50px;width:33.20px">639</span>
<span class="td r" style="left:222.60px;width:33.20px">73</span>
<span class="td r" style="left:259.70px;width:33.20px">86</span>
<span class="td r" style="left:296.80px;width:33.20px">32</span>
<span class="td r" style="left:333.90px;width:33.20px">81</span>
<span class="td r" style="left:371.00px;width:33.20px">50</span>
<span class="td r" style="left:408.10px;width:33.20px">290</span>
<span class="td" style="left:447.60px;width:33.90px">27Q309</span>
<span class="td r" style="left:482.30px;width:33.20px">40.60201</span>
<span class="td r" style="left:519.40px;width:33.20px">-73.76279</span>
<span class="td" style="left:558.90px;width:33.90px">Spanish</span>
<span class="td" style="left:596.00px;width:33.90px">AP Biology, ...</span>
<span class="td" style="left:633.10px;width:33.90px">Basketball, Fo...</span>
</div>
<div class="tr" style="top:386.65px;height:12.85px">
<span class="td" style="left:2.40px;width:33.90px">BRONX</span>
<span class="td" style="left:39.50px;width:33.90px">DeWitt Clint...</span>
<span class="td" style="left:76.60px;width:33.90px">Van Cortlan...</span>
<span class="td" style="left:113.70px;width:33.90px">Science &amp; M...</span>
<span class="td" style="left:150.80px;width:33.90px">Ed. Opt.</span>
<span class="td r" style="left:185.50px;width:33.20px">1203</span>
<span class="td r" style="left:222.60px;width:33.20px">50</span>
<span class="td r" style="left:259.70px;width:33.20px">84</span>
<span class="td r" style="left:296.80px;width:33.20px">34</span>
<span class="td r" style="left:333.90px;width:33.20px">68</span>
<span class="td r" style="left:371.00px;width:33.20px">118</span>
<span class="td r" style="left:408.10px;width:33.20px">532</span>
<span class="td" style="left:447.60px;width:33.90px">10X440</span>
<span class="td r" style="left:482.30px;width:33.20px">40.88217</span>
<span class="td r" style="left:519.40px;width:33.20px">-73.88691</span>
<span class="td" style="left:558.90px;width:33.90px">American Si...</span>
<span class="td" style="left:596.00px;width:33.90px">AP Biology, ...</span>
<span class="td" style="left:633.10px;width:33.90px">Cheerleading, ...</span>
</div>
<div class="tr b5" style="top:399.50px;height:12.85px">
<span class="td" style="left:2.40px;width:33.90px">QUEENS</span>
<span class="td" style="left:39.50px;width:33.90px">Epic High Sc...</span>
<span class="td" style="left:76.60px;width:33.90px">Richmond Hill</span>
<span class="td" style="left:113.70px;width:33.90px">Humanities ...</span>
<span class="td" style="left:150.80px;width:33.90px">Open</span>
<span class="td r" style="left:185.50px;width:33.20px">350</span>
<span class="td r" style="left:222.60px;width:33.20px">0</span>
<span class="td r" style="left:259.70px;width:33.20px">89</span>
<span class="td r" style="left:296.80px;width:33.20px">0</span>
<span class="td r" style="left:333.90px;width:33.20px">93</span>
<span class="td r" style="left:371.00px;width:33.20px">68</span>
<span class="td r" style="left:408.10px;width:33.20px">479</span>
<span class="td" style="left:447.60px;width:33.90px">27Q334</span>
<span class="td r" style="left:482.30px;width:33.20px">40.693</span>
<span class="td r" style="left:519.40px;width:33.20px">-73.8294</span>
<span class="td" style="left:558.90px;width:33.90px">Spanish</span>
<span class="td" style="left:596.00px;width:33.90px">AP Biology, ...</span>
<span class="td" style="left:633.10px;width:33.90px">League Team ...</span>
</div>
<div class="vlb" style="left:36.60px;background:#1d1d1d"></div>
<div class="vlb" style="left:73.70px;background:#191919"></div>
<div class="vlb" style="left:110.80px;background:#191919"></div>
<div class="vlb" style="left:147.90px;background:#191919"></div>
<div class="vlb" style="left:185.00px;background:#1d1d1d"></div>
<div class="vlb" style="left:222.10px;background:#191919"></div>
<div class="vlb" style="left:259.20px;background:#191919"></div>
<div class="vlb" style="left:296.30px;background:#191919"></div>
<div class="vlb" style="left:333.40px;background:#191919"></div>
<div class="vlb" style="left:370.50px;background:#191919"></div>
<div class="vlb" style="left:407.60px;background:#191919"></div>
<div class="vlb" style="left:444.70px;background:#191919"></div>
<div class="vlb" style="left:481.80px;background:#191919"></div>
<div class="vlb" style="left:518.90px;background:#191919"></div>
<div class="vlb" style="left:556.00px;background:#191919"></div>
<div class="vlb" style="left:593.10px;background:#191919"></div>
<div class="vlb" style="left:630.20px;background:#191919"></div>
</div>
<div class="a" style="left:348px;top:501.8px;width:671px;height:11px;background:#161616"></div>
<div class="a" style="left:352px;top:504.8px;font-size:4.8px;line-height:8px;color:#777;white-space:nowrap">1 rows selected</div>
<div class="a" style="left:995.6px;top:504.6px;font-size:4.8px;line-height:8px;color:#ddd;white-space:nowrap">Total 427</div>
<div class="dev"></div>
<svg class="a" style="left:371.2px;top:501px" width="284" height="11" viewBox="371.2 501 284 11">
<g fill="none" stroke="#e2e2e2" stroke-width="0.7" stroke-linejoin="round" stroke-linecap="round">
<!-- home -->
<path d="M376.4 510.8 V507.2 L379.1 504.5 L381.8 507.2 V510.8 Z M378.1 510.8 V508.8 A1 1 0 0 1 380.1 508.8 V510.8" stroke-width="0.65"/>
<!-- app: pencil in box -->
<path d="M397.6 507.5 V510.6 H392.6 V505.6 H395.6"/>
<path d="M394.6 508.6 L398.6 504.6"/>
<!-- page -->
<path d="M433.6 506.6 V510.8 H429.4 V504.6 H431.8 Z M431.8 504.6 L433.6 506.6"/>
<path d="M432.2 510.6 L434.8 508"/>
<!-- session: clock -->
<circle cx="464.1" cy="507.8" r="2.8"/>
<path d="M464.1 506.2 V507.9 L465.2 508.8"/>
<!-- link -->
<path d="M489.9 507.8 H492.1 M490.3 506.6 H489.4 A1.2 1.2 0 0 0 489.4 509 H490.3 M491.7 506.6 H492.6 A1.2 1.2 0 0 1 492.6 509 H491.7" transform="translate(0.1 0)"/>
<!-- debug -->
<path d="M505.2 505 H507 M505.2 510.6 H507 M508.4 505 H510.2 M508.4 510.6 H510.2 M507.7 505 V510.6 M505.4 507.8 H510"/>
<path d="M532.1 507.8 H534.3 M532.5 506.6 H531.6 A1.2 1.2 0 0 0 531.6 509 H532.5 M533.9 506.6 H534.8 A1.2 1.2 0 0 1 534.8 509 H533.9"/>
<!-- quick edit -->
<path d="M547 505 H546.4 V510.6 H547 M552.2 505 H552.8 V510.6 H552.2 M548.4 506.6 L550.6 508.8 M550.8 506.4 V508.9 H548.3"/>
<!-- customize brush -->
<path d="M586.2 505 H590.6 V506.8 H588.6 V508 H587.6 V510.8"/>
<!-- info -->
<circle cx="629.8" cy="507.7" r="3"/>
<path d="M629.8 507 V509.3 M629.8 505.9 V506"/>
<!-- gear -->
<circle cx="646.2" cy="507.7" r="1.3"/>
<path d="M646.2 504.4 L647.4 505.6 L649 505.6 L649 507.2 L650 507.9 L649 508.6 L649 510.2 L647.4 510.2 L646.2 511.4 L645 510.2 L643.4 510.2 L643.4 508.6 L642.4 507.9 L643.4 507.2 L643.4 505.6 L645 505.6 Z"/>
</g>
<path d="M541.3 501 V512 M636 501 V512" stroke="#6a6a6a" stroke-width="0.6"/>
</svg>
<div class="dt" style="left:400.9px">App 117</div>
<div class="dt" style="left:436.4px">Page 2</div>
<div class="dt" style="left:469px">Session</div>
<div class="dt" style="left:513px">Debug</div>
<div class="dt" style="left:554.8px">Quick Edit</div>
<div class="dt" style="left:594px">Customize</div>
</div></body></html>
